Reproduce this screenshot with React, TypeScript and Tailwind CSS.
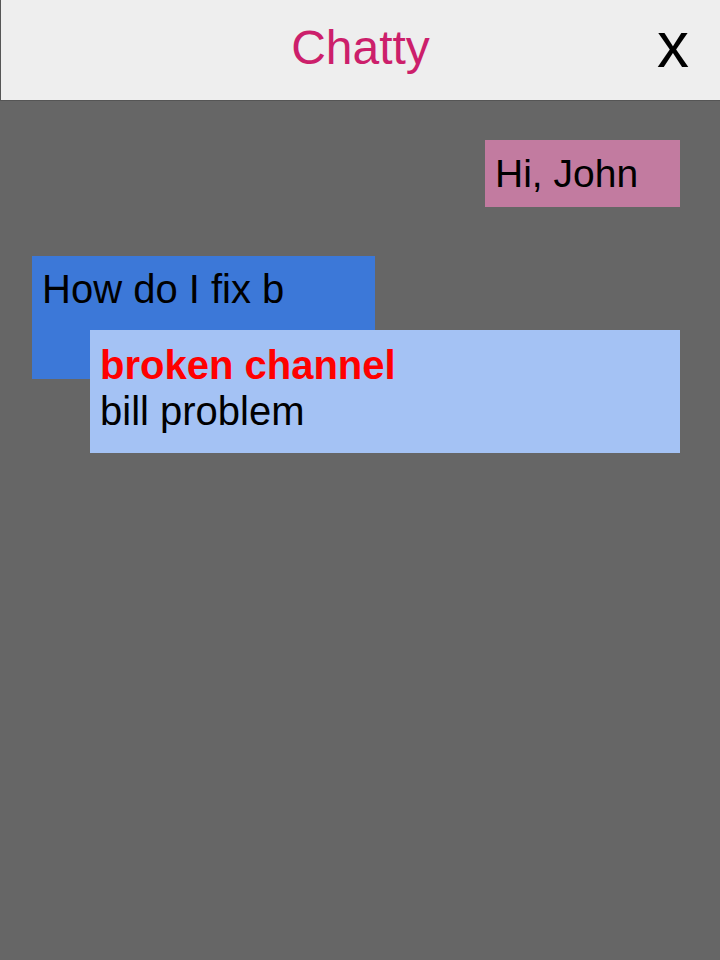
import React from 'react';

export default function App() {
    return (
        <div className="w-[720px] h-[960px] bg-[#666666] flex flex-col" style={{ fontFamily: '"Liberation Sans", Arial, sans-serif' }}>
            <header className="h-[101px] shrink-0 bg-[#eeeeee] border-l border-b border-[#555555] relative flex items-center justify-center">
                <h1 className="text-[48px] leading-none text-[#cc1f6b] -mt-[5px]">Chatty</h1>
                <button className="absolute right-[31px] top-[13px] text-[64px] leading-none text-black">x</button>
            </header>

            <div className="relative flex-1 px-[32px] pt-[39px] flex flex-col">
                <div className="self-end mr-[8px] w-[195px] h-[67px] bg-[#c27ba0] pl-[10px] pt-[14px] text-[39px] leading-none text-black">
                    Hi, John
                </div>

                <div className="relative mt-[49px] w-[343px] h-[123px] bg-[#3c78d8] pl-[10px] pt-[13px] text-[40px] leading-none text-black">
                    How do I fix b
                    {/* autocomplete */}
                    <div className="absolute left-[58px] top-[74px] w-[590px] h-[123px] bg-[#a4c2f4] pl-[10px] pt-[12px] text-[40px] leading-[46px]">
                        <div className="font-bold text-[#ff0000]">broken channel</div>
                        <div className="text-black">bill problem</div>
                    </div>
                </div>
            </div>
        </div>
    );
}
